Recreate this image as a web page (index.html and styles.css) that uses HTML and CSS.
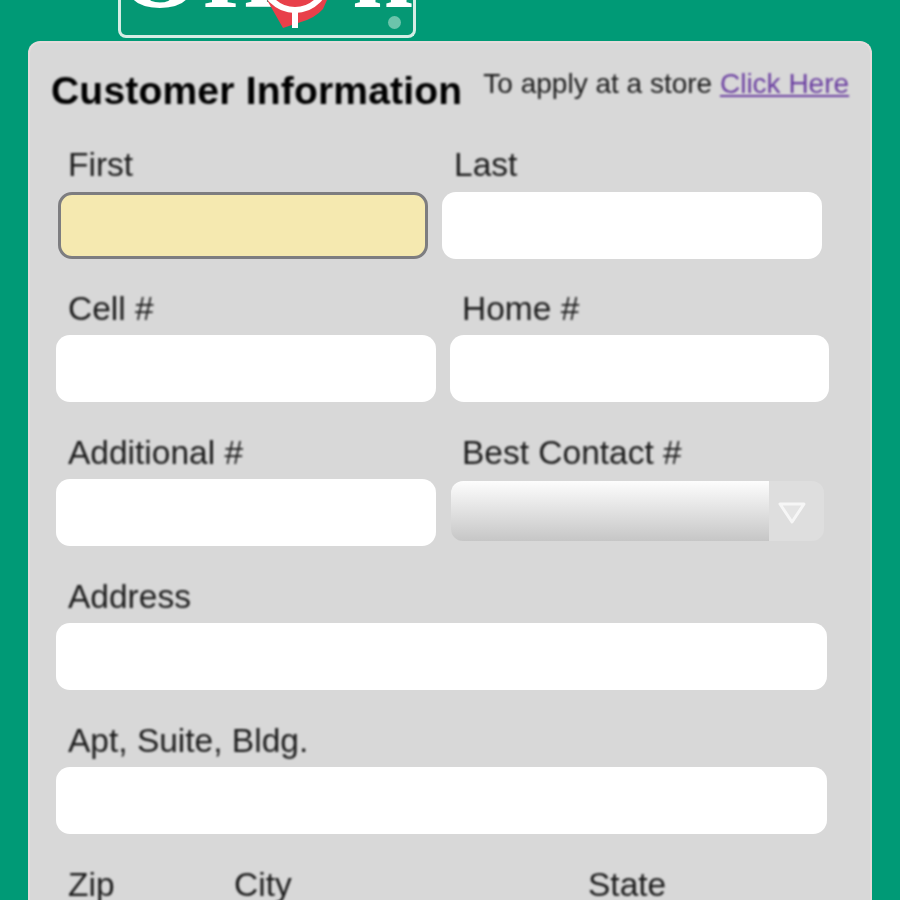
FILE: index.html
```html
<!DOCTYPE html>
<html lang="en">
<head>
<meta charset="utf-8">
<title>Customer Information</title>
<link rel="stylesheet" href="styles.css">
</head>
<body>
<div class="page">
  <header class="top">
    <div class="logo">
      <div class="logo-word"><span class="l-o">O</span><span class="l-r">r</span><span class="l-i">i</span><span class="l-n">n</span></div>
      <svg class="logo-pin" viewBox="0 0 85 36" width="85" height="36" aria-hidden="true">
        <path d="M12 0H72L68 9Q60 18 46 22L28 28Z" fill="#e8404a"/>
        <circle cx="40" cy="-22" r="32" fill="none" stroke="#fff" stroke-width="6"/>
        <path d="M40 10V28" stroke="#fff" stroke-width="6"/>
      </svg>
      <span class="logo-reg"></span>
    </div>
  </header>
  <main class="card">
    <div class="card-head">
      <h1>Customer Information</h1>
      <p class="store">To apply at a store <a href="#">Click Here</a></p>
    </div>
    <div class="row first">
      <label class="field"><span class="lbl">First</span><span class="inp focus"></span></label>
      <label class="field shift-last"><span class="lbl">Last</span><span class="inp"></span></label>
    </div>
    <div class="row">
      <label class="field"><span class="lbl">Cell #</span><span class="inp"></span></label>
      <label class="field"><span class="lbl">Home #</span><span class="inp"></span></label>
    </div>
    <div class="row">
      <label class="field"><span class="lbl">Additional #</span><span class="inp"></span></label>
      <label class="field"><span class="lbl">Best Contact #</span>
        <span class="sel"><span class="sel-main"></span><span class="sel-btn"><svg viewBox="0 0 28 22" width="28" height="22" aria-hidden="true"><path d="M2 2H26L14 20Z" fill="#e4e4e4" stroke="#f6f6f6" stroke-width="3" stroke-linejoin="round"/></svg></span></span>
      </label>
    </div>
    <div class="row one">
      <label class="field"><span class="lbl">Address</span><span class="inp"></span></label>
    </div>
    <div class="row one">
      <label class="field"><span class="lbl">Apt, Suite, Bldg.</span><span class="inp"></span></label>
    </div>
    <div class="row three">
      <label class="field"><span class="lbl">Zip</span></label>
      <label class="field"><span class="lbl">City</span></label>
      <label class="field"><span class="lbl">State</span></label>
    </div>
  </main>
</div>
</body>
</html>
```
FILE: styles.css
```css
* { box-sizing: border-box; }
html, body { margin: 0; height: 900px; overflow: hidden; }
body { background: #009a76; font-family: "Liberation Sans", Arial, sans-serif; color: #222; }
.page { height: 900px; overflow: hidden; padding: 0 28px; }
.top { height: 41px; padding: 0 0 0 90px; display: flex; align-items: flex-start; }
.logo { width: 298px; height: 38px; border: 3px solid #d5ede5; border-top: 0; border-radius: 0 0 8px 8px; position: relative; overflow: hidden; background: #059874; filter: blur(.7px); }
.logo-word { position: absolute; left: -4px; top: -85px; display: flex; font-family: "Liberation Serif", serif; font-size: 110px; line-height: 110px; font-weight: 700; color: #fff; white-space: nowrap; }
.l-i { margin-left: -8px; }
.l-n { margin-left: 78px; }
.logo-pin { position: absolute; left: 134px; top: 0; }
.logo-reg { position: absolute; right: 12px; bottom: 6px; width: 13px; height: 13px; border-radius: 50%; background: #6cc4ab; }
.card { height: 880px; background: #d8d8d8; border: 2px solid #e5dcdc; border-bottom: 0; border-radius: 12px 12px 0 0; padding: 28px 21px 0 26px; }
.card-head { display: flex; align-items: flex-start; height: 78px; margin-left: -5px; }
h1 { margin: 0; font-size: 39px; line-height: 40px; letter-spacing: .2px; font-weight: 700; color: #000; white-space: nowrap; filter: blur(.8px); }
.store { margin: -2px 0 0 21px; font-size: 28px; line-height: 30px; color: #1c1c1c; white-space: nowrap; filter: blur(.8px); }
.store a { color: #6a3ea0; text-decoration: underline; }
.row { display: grid; grid-template-columns: 380px 379px; column-gap: 14px; height: 144px; }
.row.one { grid-template-columns: 771px; }
.row.three { grid-template-columns: 152px 340px 200px; }
.field { display: block; }
.lbl { display: block; height: 41.5px; padding-left: 12px; font-size: 33.5px; line-height: 32px; color: #1c1c1c; white-space: nowrap; filter: blur(.8px); }
.inp { display: block; height: 67px; background: #fff; border-radius: 14px; filter: blur(.7px); }
.first .inp { margin-top: 1.5px; }
.inp.focus { width: 370px; margin-left: 2px; background: #f5e9b0; border: 3px solid #7d7d80; }
.shift-last { margin-left: -8px; }
.shift-last .inp { width: 380px; }
.sel { display: flex; width: 373px; height: 60px; margin: 2px 0 0 1px; border-radius: 12px; overflow: hidden; filter: blur(.7px); }
.sel-main { flex: 1; background: linear-gradient(#fdfdfd, #c6c6c6); }
.sel-btn { width: 55px; display: flex; align-items: center; justify-content: center; padding: 4px 10px 0 0; background: #dedede; }
```
